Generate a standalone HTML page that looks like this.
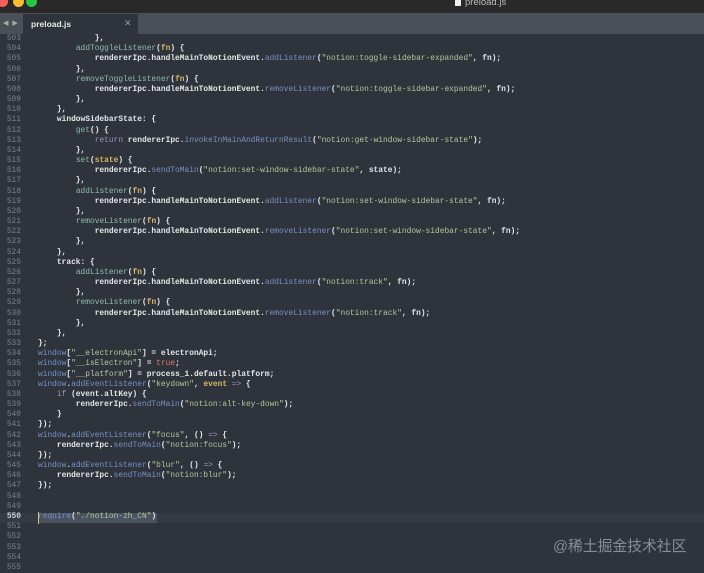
<!DOCTYPE html>
<html><head><meta charset="utf-8"><style>
*{margin:0;padding:0}
body{width:704px;height:572px;background:#2f343c;overflow:hidden;position:relative;font-family:"Liberation Sans",sans-serif}
#title{position:absolute;left:0;top:0;width:704px;height:13px;background:#29292b}
.dot{position:absolute;top:-4px;width:11px;height:11px;border-radius:50%}
#ttl{position:absolute;left:455px;top:-3px;color:#bbb;font-size:9.5px}
#tabs{position:absolute;left:0;top:13px;width:704px;height:21px;background:#4b5058}
#tab{position:absolute;left:23px;top:1px;width:115px;height:20px;background:#2f343c}
#tab span{position:absolute;left:8px;top:5px;color:#e6e6e6;font-size:8.5px;font-weight:bold}
#tab i{position:absolute;left:101px;top:4px;color:#999;font-size:9px;font-style:normal}
#arr{position:absolute;left:3px;top:6px;color:#aaa;font-size:7px;letter-spacing:1px}
#code{position:absolute;left:0;top:34px;font-family:"Liberation Mono",monospace;font-size:7.88px;line-height:10.17px;white-space:pre;color:#e4e6e8;font-weight:bold}
.ln{position:absolute;left:0;width:21px;text-align:right;color:#7b8088;font-weight:normal}
.c{position:absolute;left:38px}
.k{color:#8fbcaa;font-weight:normal}.p{color:#7590c8;font-weight:normal}.s{color:#b5c49a;font-weight:normal}.a{color:#d8b665}.r{color:#a48fbf;font-weight:normal}.t{color:#d9786a;font-weight:normal}
#wm{position:absolute;left:553px;top:535px;color:#8a8e94;font-size:14.8px;font-family:"Liberation Sans","Noto Sans CJK SC",sans-serif}
#sel{position:absolute;left:38px;top:513px;width:119px;height:10px;background:#4a5260}
#cur{position:absolute;left:38px;top:512px;width:1px;height:12px;background:#e0c060}
#hl{position:absolute;left:0;top:513px;width:704px;height:10px;background:#353a42}
</style></head><body>
<div id="hl"></div><div id="sel"></div><div id="cur"></div>
<div id="code"></div>
<div id="title">
<div class="dot" style="left:-3px;background:#fc5f57"></div>
<div class="dot" style="left:13px;background:#fdbb2e"></div>
<div class="dot" style="left:26px;background:#28c840"></div>
<div id="ttl"><span style="display:inline-block;width:6px;height:8px;background:#eee;margin-right:4px;vertical-align:-1px"></span>preload.js</div>
</div>
<div id="tabs"><div id="arr">◀ ▶</div><div id="tab"><span>preload.js</span><i>✕</i></div></div>
<div id="wm">@稀土掘金技术社区</div>
<script>
var L=[
'            <span>},</span>',
'        <span class="k">addToggleListener</span>(<span class="a">fn</span>) {',
'            rendererIpc.handleMainToNotionEvent.<span class="p">addListener</span>(<span class="s">"notion:toggle-sidebar-expanded"</span>, fn);',
'        },',
'        <span class="k">removeToggleListener</span>(<span class="a">fn</span>) {',
'            rendererIpc.handleMainToNotionEvent.<span class="p">removeListener</span>(<span class="s">"notion:toggle-sidebar-expanded"</span>, fn);',
'        },',
'    },',
'    windowSidebarState: {',
'        <span class="k">get</span>() {',
'            <span class="r">return</span> rendererIpc.<span class="p">invokeInMainAndReturnResult</span>(<span class="s">"notion:get-window-sidebar-state"</span>);',
'        },',
'        <span class="k">set</span>(<span class="a">state</span>) {',
'            rendererIpc.<span class="p">sendToMain</span>(<span class="s">"notion:set-window-sidebar-state"</span>, state);',
'        },',
'        <span class="k">addListener</span>(<span class="a">fn</span>) {',
'            rendererIpc.handleMainToNotionEvent.<span class="p">addListener</span>(<span class="s">"notion:set-window-sidebar-state"</span>, fn);',
'        },',
'        <span class="k">removeListener</span>(<span class="a">fn</span>) {',
'            rendererIpc.handleMainToNotionEvent.<span class="p">removeListener</span>(<span class="s">"notion:set-window-sidebar-state"</span>, fn);',
'        },',
'    },',
'    track: {',
'        <span class="k">addListener</span>(<span class="a">fn</span>) {',
'            rendererIpc.handleMainToNotionEvent.<span class="p">addListener</span>(<span class="s">"notion:track"</span>, fn);',
'        },',
'        <span class="k">removeListener</span>(<span class="a">fn</span>) {',
'            rendererIpc.handleMainToNotionEvent.<span class="p">removeListener</span>(<span class="s">"notion:track"</span>, fn);',
'        },',
'    },',
'};',
'<span class="p">window</span>[<span class="s">"__electronApi"</span>] = electronApi;',
'<span class="p">window</span>[<span class="s">"__isElectron"</span>] = <span class="t">true</span>;',
'<span class="p">window</span>[<span class="s">"__platform"</span>] = process_1.default.platform;',
'<span class="p">window</span>.<span class="p">addEventListener</span>(<span class="s">"keydown"</span>, <span class="a">event</span> <span class="r">=&gt;</span> {',
'    <span class="r">if</span> (event.altKey) {',
'        rendererIpc.<span class="p">sendToMain</span>(<span class="s">"notion:alt-key-down"</span>);',
'    }',
'});',
'<span class="p">window</span>.<span class="p">addEventListener</span>(<span class="s">"focus"</span>, () <span class="r">=&gt;</span> {',
'    rendererIpc.<span class="p">sendToMain</span>(<span class="s">"notion:focus"</span>);',
'});',
'<span class="p">window</span>.<span class="p">addEventListener</span>(<span class="s">"blur"</span>, () <span class="r">=&gt;</span> {',
'    rendererIpc.<span class="p">sendToMain</span>(<span class="s">"notion:blur"</span>);',
'});',
'','',
'<span class="p">require</span>(<span class="s">"./notion-zh_CN"</span>)',
'','','','',''];
var h='';
for(var i=0;i<L.length;i++){var y=(i*10.17).toFixed(2);var n=503+i;
h+='<div class="ln" style="top:'+y+'px'+(n==550?';color:#d0d3d8;font-weight:bold':'')+'">'+n+'</div><div class="c" style="top:'+y+'px">'+L[i]+'</div>';}
document.getElementById('code').innerHTML=h;
</script>
</body></html>
